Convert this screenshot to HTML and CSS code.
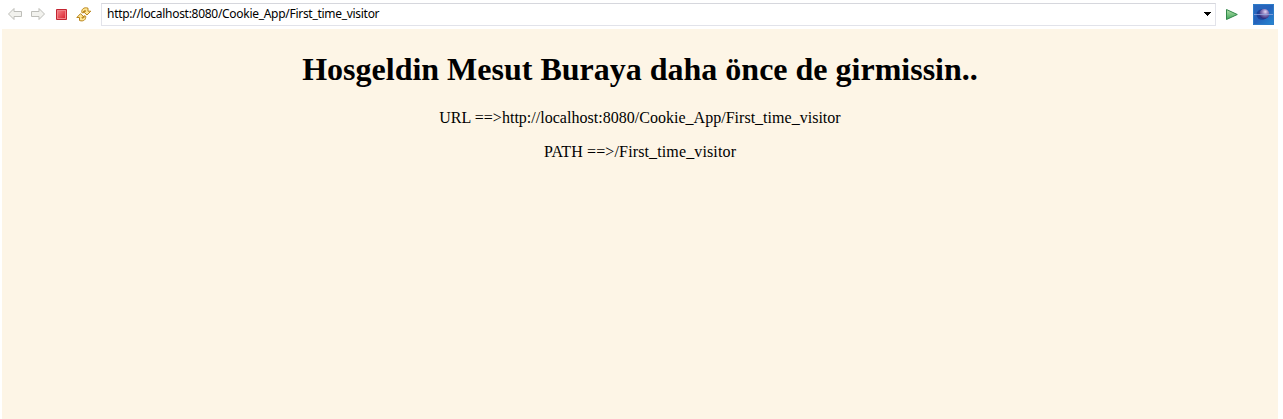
FILE: index.html
```html
<!DOCTYPE html>
<html lang="tr">
<head>
<meta charset="utf-8">
<title>First_time_visitor</title>
<link rel="stylesheet" href="styles.css">
</head>
<body>
<div class="browser">
  <div class="toolbar">
    <svg class="icon back" width="16" height="16" viewBox="0 0 16 16"><path d="M1.5 8 7 2.5V5.5H14.5V10.5H7V13.5Z" fill="#f2f2ee" stroke="#bebeb9" stroke-linejoin="round"/></svg>
    <svg class="icon forward" width="16" height="16" viewBox="0 0 16 16"><path d="M14.5 8 9 2.5V5.5H1.5V10.5H9V13.5Z" fill="#f2f2ee" stroke="#bebeb9" stroke-linejoin="round"/></svg>
    <svg class="icon stop" width="16" height="16" viewBox="0 0 16 16">
      <defs><linearGradient id="red" x1="0" y1="0" x2="1" y2="1"><stop stop-color="#f47a80"/><stop offset="1" stop-color="#dc2834"/></linearGradient></defs>
      <path d="M2.5 3.5H12.5V13.5H2.5Z" fill="#f08388" stroke="#c32531"/><path d="M4 5H11V12H4Z" fill="url(#red)"/>
    </svg>
    <svg class="icon refresh" width="16" height="16" viewBox="0 0 16 16">
      <path d="M5.8 6.5C5.3 3.2 8 .8 12 2.2V5.2H14.8L11 9 7.3 5.5H9.5V4.6C8 4.2 7.5 5.2 7.3 7Z" fill="#ffe694" stroke="#b9851d" stroke-linejoin="round"/>
      <path d="M9.7 10.2C10.2 13.5 7.5 15.9 3.5 14.5V11.5H.8L4.5 7.7 8.2 11.2H6V12.1C7.5 12.5 8 11.5 8.2 9.7Z" fill="#ffe694" stroke="#b9851d" stroke-linejoin="round"/>
    </svg>
    <div class="address">
      <span class="url">http://localhost:8080/Cookie_App/First_time_visitor</span>
      <svg class="arrow" width="7" height="4" viewBox="0 0 7 4" shape-rendering="crispEdges"><path d="M0 0H7V1H6V2H5V3H4V4H3V3H2V2H1V1H0Z"/></svg>
    </div>
    <svg class="icon go" width="16" height="16" viewBox="0 0 16 16">
      <defs><linearGradient id="green" x1="0" y1="0" x2="0" y2="1"><stop stop-color="#b4dfaa"/><stop offset="1" stop-color="#3fa65a"/></linearGradient></defs>
      <path d="M2.5 3.5V13.5L13.3 8.5Z" fill="url(#green)" stroke="#32884a" stroke-linejoin="round"/>
    </svg>
    <svg class="globe" width="21" height="21" viewBox="0 0 21 21">
      <defs>
        <linearGradient id="sky" x1="0" y1="0" x2="1" y2="1"><stop stop-color="#2b69bd"/><stop offset=".5" stop-color="#2562bb"/><stop offset="1" stop-color="#258bd3"/></linearGradient>
        <radialGradient id="planet" cx=".6" cy=".28" r=".7"><stop stop-color="#e2d9f2"/><stop offset=".35" stop-color="#9b8bc6"/><stop offset="1" stop-color="#322b7c"/></radialGradient>
      </defs>
      <path d="M0 0H21V21H0Z" fill="url(#sky)"/>
      <path d="M.5 .5H20.5V20.5H.5Z" fill="none" stroke="#2d7bc8"/>
      <ellipse cx="9" cy="10.5" rx="5.5" ry="5.2" fill="#1d4299"/>
      <circle cx="11.3" cy="10" r="5" fill="url(#planet)"/>
      <path d="M1 10.5H20" stroke="#91a4de" stroke-width=".8"/>
    </svg>
  </div>
  <main class="page">
    <h1 class="title">Hosgeldin Mesut Buraya daha önce de girmissin..</h1>
    <p class="line">URL ==&gt;http://localhost:8080/Cookie_App/First_time_visitor</p>
    <p class="line path">PATH ==&gt;/First_time_visitor</p>
  </main>
</div>
</body>
</html>
```
FILE: styles.css
```css
body {
  margin: 0;
  background: #fff;
  color: #000;
}
.browser {
  box-sizing: border-box;
  height: 419px;
  padding: 0 5px 0 2px;
  display: flex;
  flex-direction: column;
}
.toolbar {
  height: 29px;
  box-sizing: border-box;
  padding: 3px 4px 3px 5px;
  display: flex;
  align-items: flex-start;
}
.icon {
  flex: none;
  margin: 3px 7px 0 0;
}
.stop { margin-left: 1px; }
.refresh { margin-right: 9px; margin-left: -1px; }
.address {
  flex: 1;
  box-sizing: border-box;
  height: 23px;
  display: flex;
  align-items: center;
  justify-content: space-between;
  padding: 0 4px 0 5px;
  border: 1px solid #e2e3ea;
  border-top-color: #d6d7dd;
}
.url {
  font: 12px/16px "Noto Sans", "Open Sans", sans-serif;
  letter-spacing: -0.29px;
  white-space: nowrap;
  margin-bottom: 1px;
}
.arrow { margin-bottom: 1px; }
.go { margin: 3px 13px 0 8px; }
.globe { flex: none; margin-top: 1px; }
.page {
  flex: 1;
  background: #fdf5e6;
  text-align: center;
  font: 16px/18px "Liberation Serif", "Times New Roman", serif;
}
.title {
  margin: 22px 0 21px;
  font-size: 32px;
  line-height: 37px;
}
.line {
  margin: 0 0 16px;
  letter-spacing: 0.02px;
}
.path { letter-spacing: 0.13px; }
```
